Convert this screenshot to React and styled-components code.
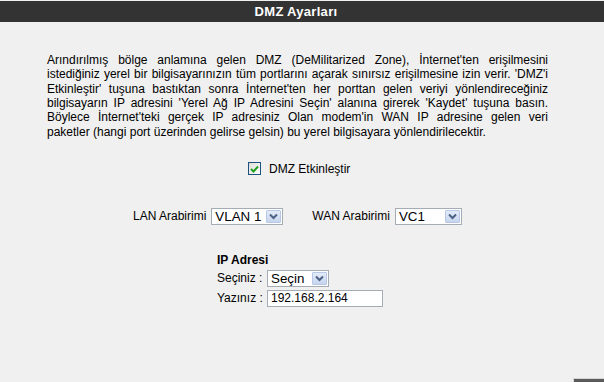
import React from "react";
import styled, { createGlobalStyle } from "styled-components";

const Global = createGlobalStyle`
  html, body { margin: 0; padding: 0; background: #f0f0f0; overflow: hidden; }
  body { font-family: "Liberation Sans", Arial, sans-serif; color: #000; }
`;

const Page = styled.div`
  width: 604px;
  height: 382px;
  background: #f0f0f0;
  display: flex;
  flex-direction: column;
`;

const Header = styled.div`
  margin-top: 1px;
  height: 21px;
  background: #333333;
  color: #fff;
  font: bold 13px/21px "Liberation Sans", Arial, sans-serif;
  letter-spacing: 0.3px;
  text-align: center;
  padding-right: 12px;
`;

const Para = styled.div`
  margin: 31px 56px 0 47px;
  font-size: 12px;
  line-height: 14.33px;
`;

const Line = styled.div`
  white-space: nowrap;
  text-align: ${(p) => (p.$last ? "left" : "justify")};
  text-align-last: ${(p) => (p.$last ? "left" : "justify")};
`;

const CheckRow = styled.label`
  margin-top: 23px;
  height: 15px;
  display: flex;
  align-items: center;
  justify-content: flex-start;
  padding-left: 248px;
  gap: 8px;
  font-size: 12px;
`;

const Box = styled.span`
  width: 11px;
  height: 11px;
  border: 1px solid #1c5180;
  background: linear-gradient(135deg, #dcdcd7, #ffffff);
  display: flex;
  align-items: center;
  justify-content: center;
`;

const SelectRow = styled.div`
  margin-top: 32px;
  display: flex;
  align-items: center;
  padding-left: 133px;
  font-size: 12px;
`;

const Group = styled.div`
  display: flex;
  align-items: center;
  gap: 5px;
  margin-right: ${(p) => p.$gap || 0}px;
`;

const Select = styled.div`
  width: ${(p) => p.$w}px;
  height: 17px;
  box-sizing: border-box;
  border: 1px solid #a5acb5;
  background: #fff;
  display: flex;
  align-items: center;
  justify-content: space-between;
  padding: 0 1px 0 3px;
  font-size: 13.33px;
`;

const ArrowBtn = styled.span`
  width: 15px;
  height: 13px;
  box-sizing: border-box;
  border: 1px solid #b7c8e6;
  border-radius: 1px;
  background: linear-gradient(#e3ebf8, #c6d5ee);
  display: flex;
  align-items: center;
  justify-content: center;
`;

const IpBlock = styled.div`
  margin-top: 28px;
  margin-left: 217px;
  display: flex;
  flex-direction: column;
  font-size: 12px;
`;

const IpTitle = styled.div`
  font-weight: bold;
  line-height: 15px;
`;

const FieldRow = styled.div`
  display: grid;
  grid-template-columns: 50px auto;
  align-items: center;
  margin-top: ${(p) => p.$mt}px;
`;

const TextInput = styled.div`
  width: 116px;
  height: 17px;
  box-sizing: border-box;
  border: 1px solid #a5acb5;
  background: #fff;
  padding-left: 3px;
  font-size: 12px;
  line-height: 15px;
`;

const Footer = styled.div`
  margin-top: 71px;
  display: flex;
  justify-content: flex-end;
`;

const FootBar = styled.div`
  width: 30px;
  height: 10px;
  background: #5a5a5a;
  border: 1px solid #d4d4d4;
  border-right: none;
`;

const Arrow = () => (
  <ArrowBtn>
    <svg width="9" height="7" viewBox="0 0 9 7">
      <path d="M1 1.5 L4.5 5 L8 1.5" fill="none" stroke="#4d6185" strokeWidth="2" />
    </svg>
  </ArrowBtn>
);

export default function App() {
  return (
    <>
      <Global />
      <Page>
        <Header>DMZ Ayarları</Header>
        <Para>
          <Line>Arındırılmış bölge anlamına gelen DMZ (DeMilitarized Zone), İnternet'ten erişilmesini</Line>
          <Line>istediğiniz yerel bir bilgisayarınızın tüm portlarını açarak sınırsız erişilmesine izin verir. 'DMZ'i</Line>
          <Line>Etkinleştir' tuşuna bastıktan sonra İnternet'ten her porttan gelen veriyi yönlendireceğiniz</Line>
          <Line>bilgisayarın IP adresini 'Yerel Ağ IP Adresini Seçin' alanına girerek 'Kaydet' tuşuna basın.</Line>
          <Line>Böylece İnternet'teki gerçek IP adresiniz Olan modem'in WAN IP adresine gelen veri</Line>
          <Line $last>paketler (hangi port üzerinden gelirse gelsin) bu yerel bilgisayara yönlendirilecektir.</Line>
        </Para>
        <CheckRow>
          <Box>
            <svg width="9" height="8" viewBox="0 0 9 8">
              <path d="M1 4 L3.5 6.5 L8 1.5" fill="none" stroke="#21a121" strokeWidth="2" />
            </svg>
          </Box>
          DMZ Etkinleştir
        </CheckRow>
        <SelectRow>
          <Group $gap={29}>
            LAN Arabirimi
            <Select $w={72}>
              VLAN 1
              <Arrow />
            </Select>
          </Group>
          <Group>
            WAN Arabirimi
            <Select $w={67}>
              VC1
              <Arrow />
            </Select>
          </Group>
        </SelectRow>
        <IpBlock>
          <IpTitle>IP Adresi</IpTitle>
          <FieldRow $mt={2}>
            <span>Seçiniz :</span>
            <Select $w={62}>
              Seçin
              <Arrow />
            </Select>
          </FieldRow>
          <FieldRow $mt={3}>
            <span>Yazınız :</span>
            <TextInput>192.168.2.164</TextInput>
          </FieldRow>
        </IpBlock>
        <Footer>
          <FootBar />
        </Footer>
      </Page>
    </>
  );
}
